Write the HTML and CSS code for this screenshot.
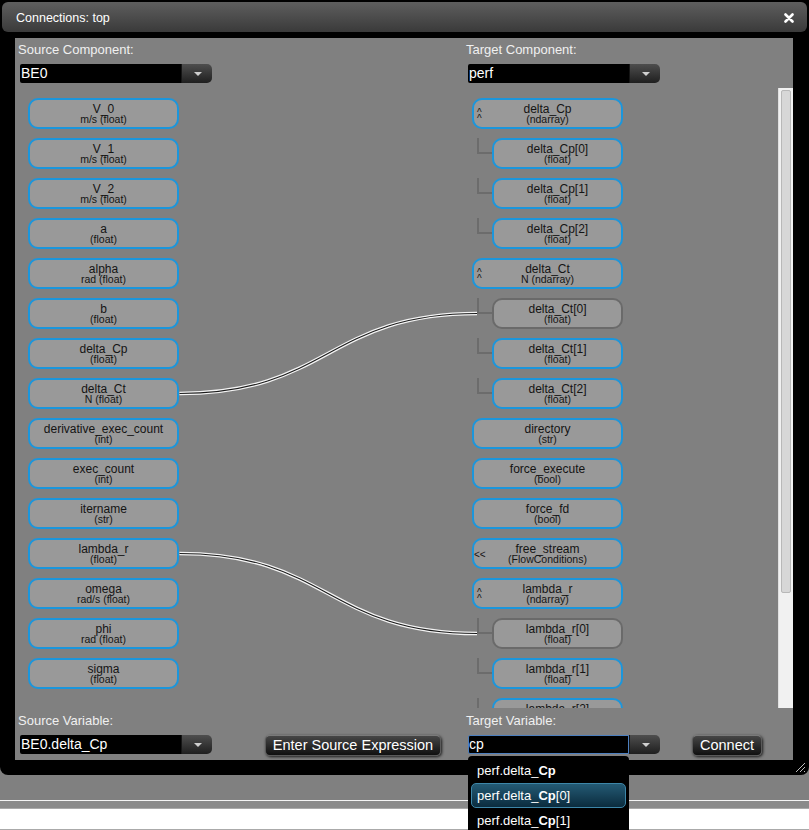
FILE: index.html
```html
<!DOCTYPE html>
<html>
<head>
<meta charset="utf-8">
<link rel="stylesheet" href="styles.css">
</head>
<body>
<div class="dialog">
  <div class="titlebar">
    <span class="title">Connections: top</span>
    <svg class="close" width="10" height="10" viewBox="0 0 10 10"><path d="M1.5 1.5 L8.5 8.5 M8.5 1.5 L1.5 8.5" stroke="#fff" stroke-width="2.6" stroke-linecap="round"/></svg>
  </div>
  <div class="panel">
    <div class="row">
      <div class="col">
        <div class="label">Source Component:</div>
        <div class="combo"><div class="combo-text">BE0</div><div class="combo-btn"><span class="arrow"></span></div></div>
      </div>
      <div class="col">
        <div class="label">Target Component:</div>
        <div class="combo"><div class="combo-text">perf</div><div class="combo-btn"><span class="arrow"></span></div></div>
      </div>
    </div>

    <div class="canvas">
      <div class="nodes">
        <svg class="wires" width="763" height="620" viewBox="0 0 763 620">
          <path d="M164.5 305.5 C313 305.5 313 225.5 462 225.5" class="wire-o"/>
          <path d="M164.5 305.5 C313 305.5 313 225.5 462 225.5" class="wire-i"/>
          <path d="M164.5 465.5 C313 465.5 313 545.5 462 545.5" class="wire-o"/>
          <path d="M164.5 465.5 C313 465.5 313 545.5 462 545.5" class="wire-i"/>
        </svg>
        <div class="node-col">
          <div class="node"><div class="nm">V_0</div><div class="ty">m/s (float)</div></div>
          <div class="node"><div class="nm">V_1</div><div class="ty">m/s (float)</div></div>
          <div class="node"><div class="nm">V_2</div><div class="ty">m/s (float)</div></div>
          <div class="node"><div class="nm">a</div><div class="ty">(float)</div></div>
          <div class="node"><div class="nm">alpha</div><div class="ty">rad (float)</div></div>
          <div class="node"><div class="nm">b</div><div class="ty">(float)</div></div>
          <div class="node"><div class="nm">delta_Cp</div><div class="ty">(float)</div></div>
          <div class="node"><div class="nm">delta_Ct</div><div class="ty">N (float)</div></div>
          <div class="node"><div class="nm">derivative_exec_count</div><div class="ty">(int)</div></div>
          <div class="node"><div class="nm">exec_count</div><div class="ty">(int)</div></div>
          <div class="node"><div class="nm">itername</div><div class="ty">(str)</div></div>
          <div class="node"><div class="nm">lambda_r</div><div class="ty">(float)</div></div>
          <div class="node"><div class="nm">omega</div><div class="ty">rad/s (float)</div></div>
          <div class="node"><div class="nm">phi</div><div class="ty">rad (float)</div></div>
          <div class="node"><div class="nm">sigma</div><div class="ty">(float)</div></div>
        </div>
        <div class="node-col">
          <div class="node"><span class="exp">^<br>^</span><div class="nm">delta_Cp</div><div class="ty">(ndarray)</div></div>
          <div class="node child"><div class="nm">delta_Cp[0]</div><div class="ty">(float)</div></div>
          <div class="node child"><div class="nm">delta_Cp[1]</div><div class="ty">(float)</div></div>
          <div class="node child"><div class="nm">delta_Cp[2]</div><div class="ty">(float)</div></div>
          <div class="node"><span class="exp">^<br>^</span><div class="nm">delta_Ct</div><div class="ty">N (ndarray)</div></div>
          <div class="node child linked"><div class="nm">delta_Ct[0]</div><div class="ty">(float)</div></div>
          <div class="node child"><div class="nm">delta_Ct[1]</div><div class="ty">(float)</div></div>
          <div class="node child"><div class="nm">delta_Ct[2]</div><div class="ty">(float)</div></div>
          <div class="node"><div class="nm">directory</div><div class="ty">(str)</div></div>
          <div class="node"><div class="nm">force_execute</div><div class="ty">(bool)</div></div>
          <div class="node"><div class="nm">force_fd</div><div class="ty">(bool)</div></div>
          <div class="node"><span class="vt">&lt;&lt;</span><div class="nm">free_stream</div><div class="ty">(FlowConditions)</div></div>
          <div class="node"><span class="exp">^<br>^</span><div class="nm">lambda_r</div><div class="ty">(ndarray)</div></div>
          <div class="node child linked"><div class="nm">lambda_r[0]</div><div class="ty">(float)</div></div>
          <div class="node child"><div class="nm">lambda_r[1]</div><div class="ty">(float)</div></div>
          <div class="node child"><div class="nm">lambda_r[2]</div><div class="ty">(float)</div></div>
        </div>
      </div>
      <div class="scrollbar"><div class="thumb"></div></div>
    </div>

    <div class="row">
      <div class="col">
        <div class="label">Source Variable:</div>
        <div class="ctl-row">
          <div class="combo"><div class="combo-text">BE0.delta_Cp</div><div class="combo-btn"><span class="arrow"></span></div></div>
          <div class="btn btn-expr">Enter Source Expression</div>
        </div>
      </div>
      <div class="col">
        <div class="label">Target Variable:</div>
        <div class="ctl-row">
          <div class="combo"><div class="combo-text focused">cp</div><div class="combo-btn"><span class="arrow"></span></div></div>
          <div class="btn btn-connect">Connect</div>
        </div>
      </div>
    </div>
  </div>
  <svg class="grip" width="12" height="12" viewBox="0 0 12 12"><path d="M11 2 L2 11 M11 6 L6 11 M11 10 L10 11" stroke="#bbb" stroke-width="1"/></svg>
  <div class="menu">
    <div class="item">perf.delta_<b>Cp</b></div>
    <div class="item sel">perf.delta_<b>Cp</b>[0]</div>
    <div class="item">perf.delta_<b>Cp</b>[1]</div>
  </div>
</div>
<div class="page-bottom">
  <div class="band"></div>
  <div class="white"></div>
</div>
</body>
</html>
```

FILE: styles.css
```css
html, body {
  margin: 0;
  padding: 0;
  height: 100%;
  overflow: hidden;
}
body {
  background: #808080;
  font-family: "Liberation Sans", Arial, sans-serif;
}
.dialog {
  position: relative;
  background: #000;
  padding: 2px 2px 15px 2px;
  border-radius: 0 0 8px 8px;
}
.titlebar {
  height: 30px;
  border-radius: 6px;
  background: linear-gradient(#5e5e5e, #3a3a3a);
  display: flex;
  align-items: center;
  justify-content: space-between;
  padding: 0 13px 0 14px;
}
.title {
  color: #fff;
  font-size: 12.5px;
  padding-top: 1px;
}
.close {
  display: block;
  margin-top: 1px;
}
.panel {
  margin: 6px 14px 0 13px;
  height: 722px;
  background: #808080;
  padding: 4px 0 4px 0;
  box-sizing: border-box;
  display: flex;
  flex-direction: column;
}
.row {
  display: grid;
  grid-template-columns: 448px 1fr;
  padding-left: 3px;
}
.label {
  color: #f0f0f0;
  font-size: 13px;
  line-height: 16px;
  margin-bottom: 6px;
}
.combo {
  display: flex;
  width: 192px;
  height: 19px;
  margin-left: 2px;
}
.combo-text {
  width: 161px;
  box-sizing: border-box;
  background: #000;
  color: #fff;
  font-size: 14px;
  line-height: 19px;
  padding-left: 1px;
  border-radius: 2px 0 0 2px;
}
.combo-text.focused {
  border: 1px solid #4c7fbf;
  line-height: 17px;
  padding-left: 0;
}
.combo-btn {
  width: 31px;
  background: linear-gradient(#4e4e4e, #1f1f1f);
  border-left: 1px solid #151515;
  border-radius: 0 5px 5px 0;
  display: flex;
  align-items: center;
  justify-content: center;
  box-sizing: border-box;
}
.arrow {
  width: 0;
  height: 0;
  border-left: 4px solid transparent;
  border-right: 4px solid transparent;
  border-top: 4px solid #cfcfcf;
  margin-left: 2px;
}
.canvas {
  height: 620px;
  margin: 5px 0 5px 0;
  display: flex;
}
.nodes {
  flex: 1;
  position: relative;
  overflow: hidden;
  display: grid;
  grid-template-columns: 151px 151px;
  column-gap: 293px;
  align-items: start;
  padding: 10px 0 0 13px;
}
.wires {
  position: absolute;
  left: 0;
  top: 0;
}
.wire-o {
  fill: none;
  stroke: #f4f4f4;
  stroke-width: 3.6;
}
.wire-i {
  fill: none;
  stroke: #1a1a1a;
  stroke-width: 1.1;
}
.node-col {
  display: flex;
  flex-direction: column;
  gap: 9px;
  position: relative;
}
.node {
  position: relative;
  height: 31px;
  box-sizing: border-box;
  border: 2px solid #1b96dc;
  border-radius: 10px;
  background: #999999;
  text-align: center;
  color: #141414;
  padding-top: 4px;
}
.node.child {
  margin-left: 20px;
}
.node.child::before {
  content: "";
  position: absolute;
  left: -17px;
  top: -2px;
  width: 13px;
  height: 14px;
  border-left: 2px solid #6c6c6c;
  border-bottom: 2px solid #6c6c6c;
}
.node.linked {
  border-color: #6a6a6a;
}
.nm {
  font-size: 12px;
  line-height: 11px;
  white-space: nowrap;
}
.ty {
  font-size: 10.5px;
  line-height: 8px;
  white-space: nowrap;
}
.exp {
  position: absolute;
  left: 3px;
  top: 10px;
  font-size: 10px;
  line-height: 6px;
  text-align: left;
}
.vt {
  position: absolute;
  left: 0;
  top: 10px;
  font-size: 10px;
  line-height: 10px;
}
.scrollbar {
  width: 15px;
  background: #f1f1f1;
  border-left: 1px solid #e0e0e0;
  box-sizing: border-box;
  padding: 2px 2px 0 2px;
}
.thumb {
  height: 503px;
  background: #d7d7d7;
  border: 1px solid #b8b8b8;
  border-radius: 2px;
  box-sizing: border-box;
}
.ctl-row {
  display: flex;
  align-items: flex-start;
}
.btn {
  height: 21px;
  box-sizing: border-box;
  background: linear-gradient(#464646, #101010);
  border: 1px solid #5a5a5a;
  border-top-color: #7a7a7a;
  border-radius: 5px;
  color: #fff;
  font-size: 14.5px;
  line-height: 19px;
  text-align: center;
  box-shadow: 1px 1px 3px rgba(0, 0, 0, 0.8);
  white-space: nowrap;
}
.btn-expr {
  width: 176px;
  margin-left: 53px;
}
.btn-connect {
  width: 70px;
  margin-left: 32px;
}
.grip {
  position: absolute;
  right: 3px;
  bottom: 2px;
}
.menu {
  position: absolute;
  left: 468px;
  top: 756px;
  width: 161px;
  height: 90px;
  background: #000;
  border-radius: 4px 4px 0 0;
  padding-top: 2px;
  box-sizing: border-box;
}
.item {
  height: 25px;
  box-sizing: border-box;
  margin: 0 3px;
  padding-left: 5px;
  border: 1px solid transparent;
  border-radius: 5px;
  color: #fff;
  font-size: 13px;
  line-height: 23px;
}
.item.sel {
  background: linear-gradient(#245a74, #0b2c3e);
  border-color: #3d86a8;
}
.page-bottom {
  margin-top: 25px;
  border-top: 1px solid #f4f4f4;
}
.band {
  height: 7px;
  background: #8a8a8a;
  border-bottom: 1px solid #a9a9a9;
}
.white {
  height: 20px;
  background: #fff;
  border-bottom: 1px solid #aaa;
}
```
